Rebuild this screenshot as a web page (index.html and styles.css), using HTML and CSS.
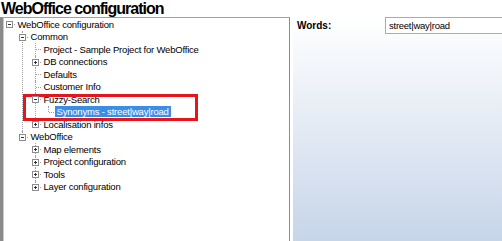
FILE: index.html
```html
<!DOCTYPE html>
<html lang="en">
<head>
    <meta charset="UTF-8">
    <meta name="viewport" content="width=device-width, initial-scale=1.0">
    <title>WebOffice configuration</title>
    <link rel="stylesheet" href="styles.css">
</head>
<body>
    <div class="title">WebOffice configuration</div>

    <div class="main">
        <div class="tree">
            <ul class="nodes">
                <li class="last">
                    <div class="row"><span class="exp"></span><span class="label">WebOffice configuration</span></div>
                    <ul class="nodes">
                        <li>
                            <div class="row"><span class="exp"></span><span class="label">Common</span></div>
                            <ul class="nodes">
                                <li><div class="row"><span class="label">Project - Sample Project for WebOffice</span></div></li>
                                <li><div class="row"><span class="exp plus"></span><span class="label">DB connections</span></div></li>
                                <li><div class="row"><span class="label">Defaults</span></div></li>
                                <li><div class="row"><span class="label">Customer Info</span></div></li>
                                <li>
                                    <div class="row"><span class="exp"></span><span class="label">Fuzzy-Search</span></div>
                                    <ul class="nodes">
                                        <li class="last"><div class="row"><span class="label selected">Synonyms - street|way|road</span></div></li>
                                    </ul>
                                </li>
                                <li class="last"><div class="row"><span class="exp plus"></span><span class="label">Localisation infos</span></div></li>
                            </ul>
                        </li>
                        <li class="last">
                            <div class="row"><span class="exp"></span><span class="label">WebOffice</span></div>
                            <ul class="nodes">
                                <li><div class="row"><span class="exp plus"></span><span class="label">Map elements</span></div></li>
                                <li><div class="row"><span class="exp plus"></span><span class="label">Project configuration</span></div></li>
                                <li><div class="row"><span class="exp plus"></span><span class="label">Tools</span></div></li>
                                <li class="last"><div class="row"><span class="exp plus"></span><span class="label">Layer configuration</span></div></li>
                            </ul>
                        </li>
                    </ul>
                </li>
            </ul>
            <!-- highlight frame drawn over the tree -->
            <div class="callout"></div>
        </div>

        <div class="props">
            <div class="field">
                <label class="field-label" for="words">Words:</label>
                <input class="field-input" id="words" type="text" value="street|way|road">
            </div>
        </div>
    </div>
</body>
</html>
```

FILE: styles.css
```css
* {
    box-sizing: border-box;
}

html, body {
    margin: 0;
    padding: 0;
    width: 502px;
    height: 241px;
    overflow: hidden;
    background: #fff;
    color: #000;
    font-family: "Liberation Sans", Arial, sans-serif;
    font-size: 9.5px;
    letter-spacing: -0.2px;
}

.title {
    height: 17px;
    padding: 1px 0 0 1px;
    line-height: 16px;
    font-size: 16px;
    font-weight: bold;
    letter-spacing: -1px;
    white-space: nowrap;
}

.main {
    display: flex;
    gap: 3px;
    height: 224px;
}

/* tree view */
.tree {
    position: relative;
    width: 290px;
    padding-left: 1px;
    border-left: 3px solid #8a8a8a;
    border-top: 1px solid #a0a0a0;
    border-right: 1px solid #8c8c8c;
    box-shadow: inset 1px 0 #c8c8c8;
}

.nodes {
    list-style: none;
    margin: 0;
    padding: 0;
}

.nodes .nodes {
    padding-left: 13px;
}

.nodes li {
    position: relative;
}

.nodes .nodes li::before {
    content: "";
    position: absolute;
    left: 5px;
    top: 0;
    bottom: 0;
    border-left: 1px dotted #a0a0a0;
}

.nodes .nodes li.last::before {
    bottom: auto;
    height: 6px;
}

.row {
    position: relative;
    display: flex;
    align-items: center;
    height: 12.5px;
    padding-left: 11.5px;
}

.row::before {
    content: "";
    position: absolute;
    left: 6px;
    top: 6px;
    width: 5px;
    border-top: 1px dotted #a0a0a0;
}

.label {
    padding: 0 2px;
    line-height: 11px;
    white-space: nowrap;
}

.label.selected {
    background: #3a8ee8;
    color: #fff;
}

.exp {
    position: absolute;
    left: 2px;
    top: 3px;
    width: 7px;
    height: 7px;
    border: 1px solid #8c8c8c;
    background: #fff;
    z-index: 1;
}

.exp::before {
    content: "";
    position: absolute;
    left: 1px;
    top: 2px;
    width: 3px;
    height: 1px;
    background: #333;
}

.exp.plus::after {
    content: "";
    position: absolute;
    left: 2px;
    top: 1px;
    width: 1px;
    height: 3px;
    background: #333;
}

.callout {
    position: absolute;
    left: 20px;
    top: 76px;
    width: 175px;
    height: 27px;
    border: 3px solid #e8141c;
}

/* property panel */
.props {
    flex: 1;
    padding-left: 4px;
    overflow: hidden;
    background: linear-gradient(#fff, #c7d5e9);
}

.field {
    display: flex;
    align-items: center;
    height: 17px;
}

.field-label {
    width: 88px;
    flex: none;
    font-size: 10px;
    font-weight: bold;
    letter-spacing: 0;
}

.field-input {
    flex: none;
    width: 140px;
    height: 17px;
    margin: 0;
    padding: 0 0 0 3px;
    border: 1px solid #ababab;
    background: #fff;
    font-family: inherit;
    font-size: 9.5px;
    letter-spacing: -0.25px;
    color: #000;
    outline: none;
}
```
